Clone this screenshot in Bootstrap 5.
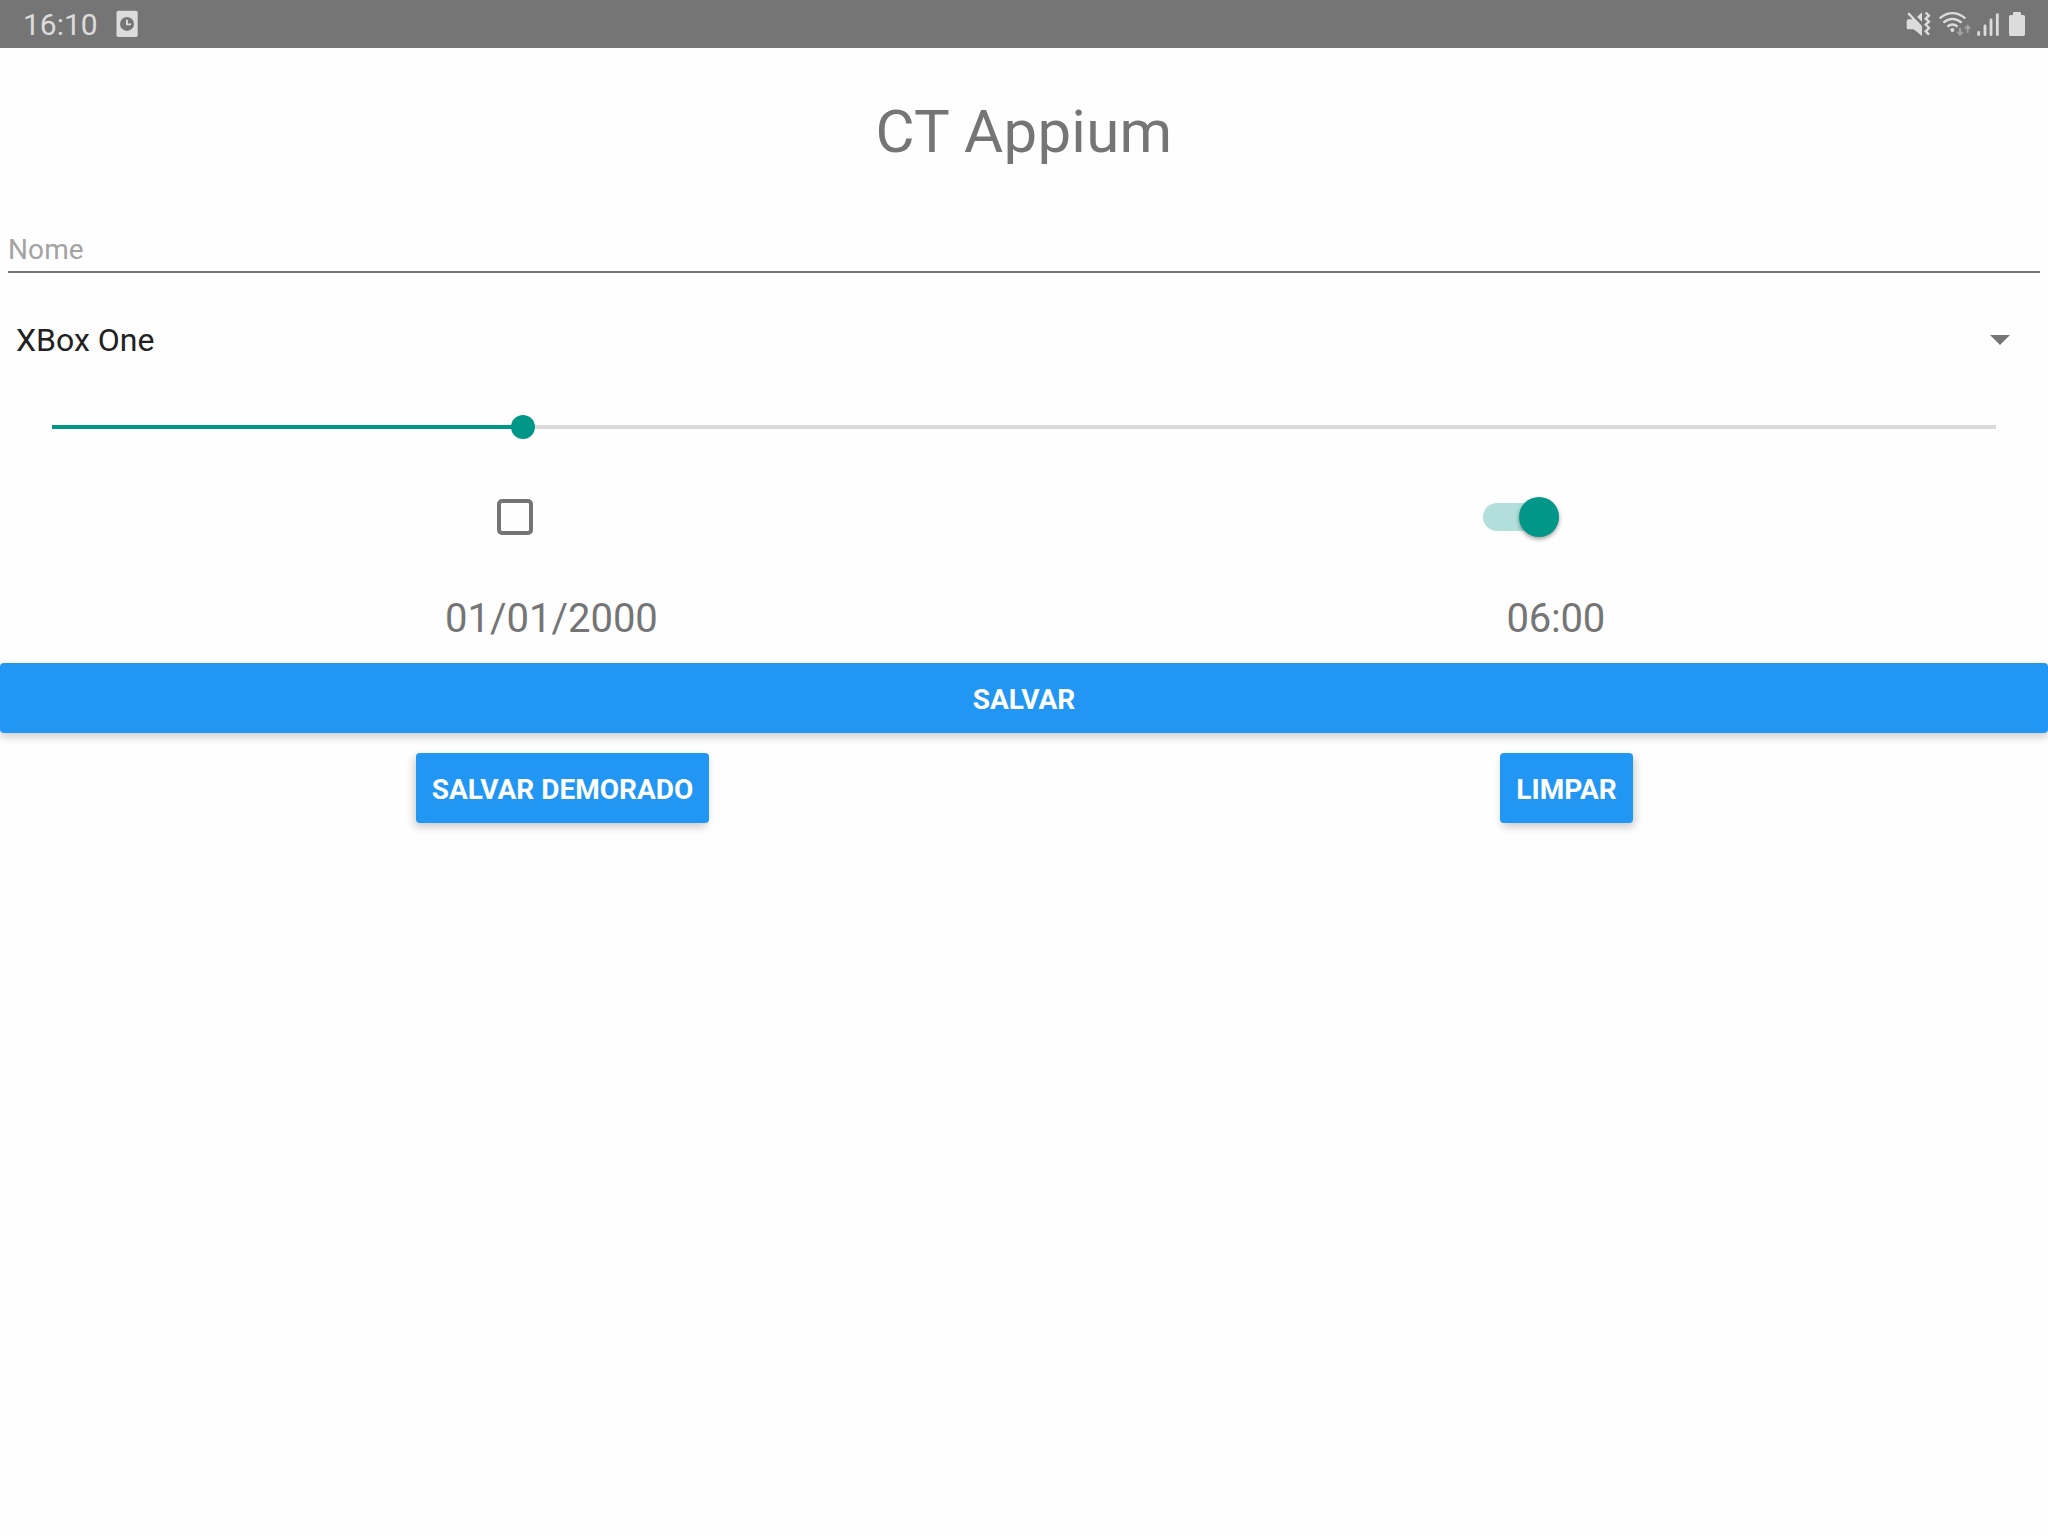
<!DOCTYPE html>
<html lang="pt-BR">
<head>
<meta charset="utf-8">
<meta name="viewport" content="width=device-width, initial-scale=1">
<title>CT Appium</title>
<link href="https://cdn.jsdelivr.net/npm/bootstrap@5.3.0/dist/css/bootstrap.min.css" rel="stylesheet">
<style>
  body { font-family: Roboto, "Liberation Sans", sans-serif; background: #fefefe; color: #757575; }
  .status-bar { height: 48px; background: #757575; color: #dcdcdc; padding-left: 23px; }
  .clock-text { font-size: 30px; line-height: 48px; padding-top: 1px; }
  .notify-icon { margin-left: 14px; }
  .app-title { font-size: 60px; font-weight: 400; line-height: 167px; letter-spacing: .25px; color: #757575; }
  .name-input, .name-input:focus { height: 45px; margin: 13px 8px 0; width: calc(100% - 16px); border: 0; border-bottom: 2px solid #757575; border-radius: 0; background: transparent; padding: 0; font-size: 28px; line-height: 43px; letter-spacing: .1px; box-shadow: none; }
  .name-input::placeholder { color: #a3a3a3; opacity: 1; }
  .spinner-row { height: 134px; padding: 0 38px 0 16px; font-size: 32px; line-height: 40px; color: #212121; }
  .slider-row { height: 40px; padding: 0 52px; }
  .slider-rail { height: 4px; background: #dadada; }
  .slider-fill { height: 4px; background: #009688; }
  .slider-knob { width: 24px; height: 24px; margin-left: -12px; background: #009688; }
  .toggle-row { height: 140px; padding-left: 497px; padding-right: 489px; }
  .toggle-row .form-check-input { width: 36px; height: 36px; margin: 0; border: 4px solid #757575; border-radius: 5px; background-color: #fefefe; }
  .switch-track { width: 76px; height: 28px; border-radius: 14px; background: #b2dfdb; }
  .switch-thumb { width: 40px; height: 40px; background: #009688; box-shadow: 0 2px 4px rgba(0,0,0,.38); }
  .values-row { height: 63px; margin-bottom: 13px; padding: 0 443px 0 445px; font-size: 40px; line-height: 63px; }
  .time-value { letter-spacing: -.2px; }
  .btn-app { height: 70px; border: 0; border-radius: 4px; background: #2196f3; color: #fff; font-size: 28px; font-weight: 700; line-height: 67px; padding: 3px 16px 0; white-space: nowrap; box-shadow: 0 4px 9px rgba(0,0,0,.2); }
  .btn-left { width: 293px; padding: 3px 15px 0 16px; box-shadow: -2px 4px 9px rgba(0,0,0,.2); }
  .btn-right { width: 133px; padding: 3px 15px 0 16px; box-shadow: 2px 4px 9px rgba(0,0,0,.2); }
  .actions-row { padding: 0 20px; margin-top: 20px; }
</style>
</head>
<body class="min-vh-100">
<header class="status-bar d-flex justify-content-between">
  <div class="d-flex">
    <span class="clock-text">16:10</span>
    <svg class="notify-icon" width="32" height="48" viewBox="112 0 32 48" aria-hidden="true">
      <rect x="116.5" y="10.7" width="21.2" height="26.3" rx="1.8" fill="#dcdcdc"/>
      <circle cx="127" cy="23.9" r="7" fill="#757575"/>
      <path d="M127 19.7V24.4H131" fill="none" stroke="#dcdcdc" stroke-width="1.9"/>
    </svg>
  </div>
  <svg width="158" height="48" viewBox="0 0 474 144" aria-hidden="true" fill="#dcdcdc">
    <path d="M50 63Q50 58 55 58H67L52 42L57 37L96 78V108L71 88H55Q50 88 50 83Z"/>
    <path d="M96 37V65L81 51Z"/>
    <path d="M107 38L117 47L107 56L117 65L107 74L117 84L107 94L117 104" fill="none" stroke="#dcdcdc" stroke-width="7"/>
    <g fill="none" stroke="#dcdcdc" stroke-width="7"><path d="M149 55Q187 24 226 55"/><path d="M160 68Q187 45 215 68"/><path d="M172 80Q187 67 203 80"/></g>
    <circle cx="187" cy="90" r="6"/>
    <path d="M210 83V102M202 96L210 104L218 96M233 98V79M225 86L233 78L241 86" fill="none" stroke="#a3a3a3" stroke-width="6"/>
    <g stroke="#dcdcdc" stroke-width="8.5" stroke-linecap="round"><path d="M266 97V104M285 78V104M303 60V104M322 44V104"/></g>
    <path d="M357 50Q357 45 362 45H369V39Q369 36 372 36H390Q393 36 393 39V45H400Q405 45 405 50V103Q405 108 400 108H362Q357 108 357 103Z"/>
  </svg>
</header>
<main>
  <h1 class="app-title text-center m-0">CT Appium</h1>
  <input class="form-control name-input" type="text" placeholder="Nome" aria-label="Nome">
  <div class="spinner-row d-flex align-items-center justify-content-between">
    <span>XBox One</span>
    <svg width="20" height="10" viewBox="0 0 20 10" aria-hidden="true"><path d="M0 0H20L10 10Z" fill="#757575"/></svg>
  </div>
  <div class="slider-row d-flex align-items-center">
    <div class="slider-fill" style="width:471px"></div>
    <div class="slider-knob rounded-circle flex-shrink-0"></div>
    <div class="slider-rail flex-grow-1"></div>
  </div>
  <div class="toggle-row d-flex align-items-center justify-content-between">
    <input class="form-check-input" type="checkbox" aria-label="check">
    <div class="switch-track d-flex align-items-center justify-content-end"><div class="switch-thumb rounded-circle flex-shrink-0"></div></div>
  </div>
  <div class="values-row d-flex justify-content-between">
    <span>01/01/2000</span>
    <span class="time-value">06:00</span>
  </div>
  <button class="btn btn-app w-100 d-block">SALVAR</button>
  <div class="actions-row d-flex justify-content-around">
    <button class="btn btn-app btn-left">SALVAR DEMORADO</button>
    <button class="btn btn-app btn-right">LIMPAR</button>
  </div>
</main>
<script src="https://cdn.jsdelivr.net/npm/bootstrap@5.3.0/dist/js/bootstrap.bundle.min.js"></script>
</body>
</html>
